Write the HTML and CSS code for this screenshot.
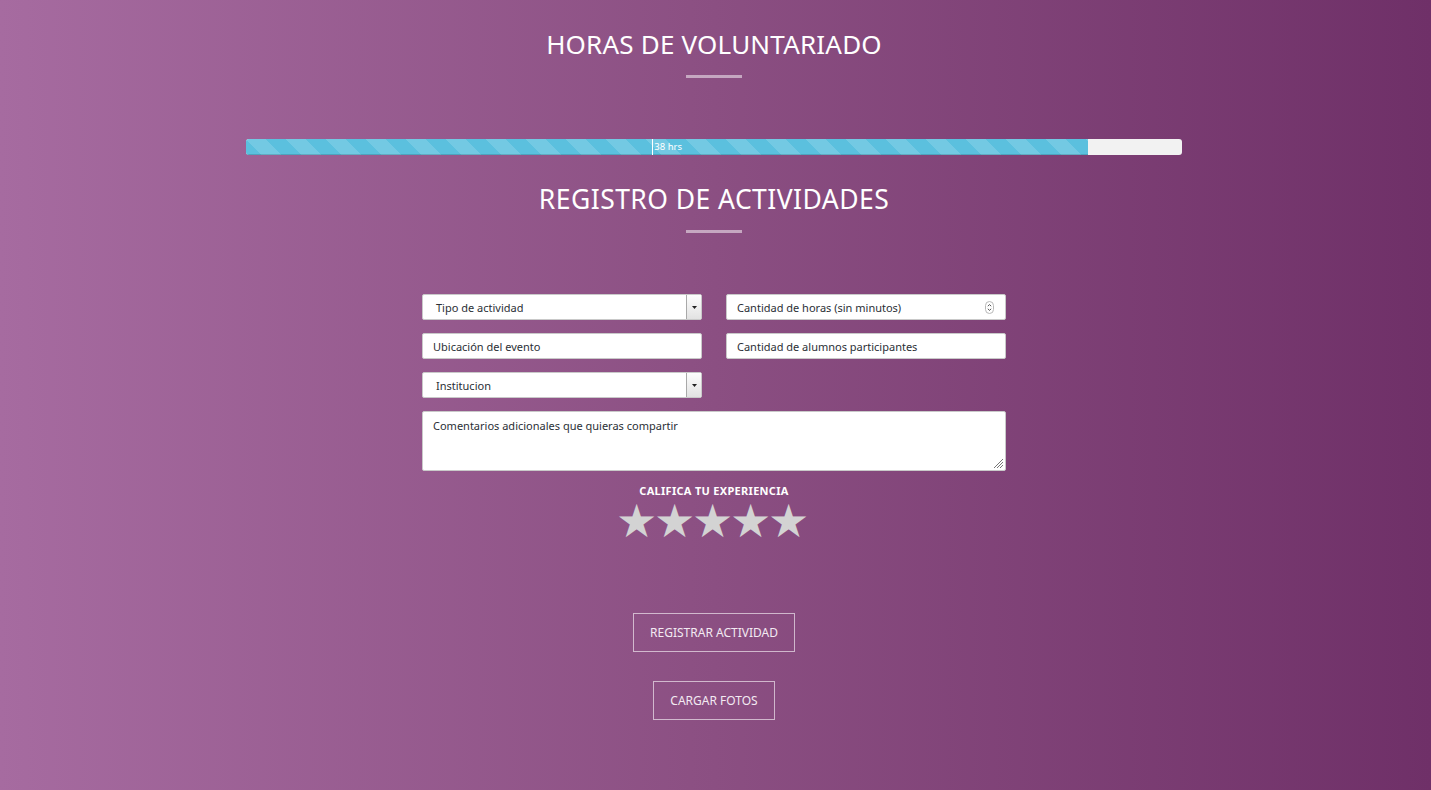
FILE: index.html
```html
<!DOCTYPE html>
<html lang="es">
<head>
<meta charset="utf-8">
<title>Horas de voluntariado</title>
<link rel="stylesheet" href="styles.css">
</head>
<body>
<main class="page">
  <section class="hours">
    <h1 class="title">HORAS DE VOLUNTARIADO</h1>
    <div class="rule"></div>
    <div class="progress">
      <div class="progress-fill" style="width: 90%"><span class="progress-label">38 hrs</span></div>
    </div>
  </section>

  <section class="register">
    <h2 class="title">REGISTRO DE ACTIVIDADES</h2>
    <div class="rule"></div>

    <form class="form">
      <div class="row">
        <div class="field select">
          <span class="select-text">Tipo de actividad</span>
          <span class="select-btn"><svg width="5" height="3" viewBox="0 0 5 3"><path d="M0 0h5L2.5 3z" fill="#222"/></svg></span>
        </div>
        <div class="field number">
          <span>Cantidad de horas (sin minutos)</span>
          <svg class="spin" width="9" height="13" viewBox="0 0 9 13"><rect x="0.5" y="0.5" width="8" height="12" rx="4" fill="#fff" stroke="#b8b8b8"/><path d="M2.8 5.2L4.5 3.6 6.2 5.2M2.8 7.8L4.5 9.4 6.2 7.8" fill="none" stroke="#444" stroke-width="0.9"/></svg>
        </div>
      </div>
      <div class="row">
        <div class="field text">Ubicación del evento</div>
        <div class="field text">Cantidad de alumnos participantes</div>
      </div>
      <div class="row">
        <div class="field select">
          <span class="select-text">Institucion</span>
          <span class="select-btn"><svg width="5" height="3" viewBox="0 0 5 3"><path d="M0 0h5L2.5 3z" fill="#222"/></svg></span>
        </div>
        <div class="spacer"></div>
      </div>
      <div class="field textarea">
        <span>Comentarios adicionales que quieras compartir</span>
        <svg class="grip" width="12" height="12" viewBox="0 0 12 12"><path d="M11 2L2 11M11 5L5 11M11 8L8 11" stroke="#777" stroke-width="1"/></svg>
      </div>
    </form>

    <div class="rating">
      <p class="rating-label">CALIFICA TU EXPERIENCIA</p>
      <div class="stars">
        <span class="star">★</span><span class="star">★</span><span class="star">★</span><span class="star">★</span><span class="star">★</span>
      </div>
    </div>

    <div class="actions">
      <button class="btn" type="button">REGISTRAR ACTIVIDAD</button>
      <button class="btn" type="button">CARGAR FOTOS</button>
    </div>
  </section>
</main>
</body>
</html>
```

FILE: styles.css
```css
* { box-sizing: border-box; }
html, body { margin: 0; height: 100%; }
body {
  background: linear-gradient(90deg, #a66ba0 0%, #8b4f82 50%, #6f3068 100%);
  font-family: "Noto Sans", "Open Sans", sans-serif;
  color: #fff;
  overflow: hidden;
}
.page {
  display: flex;
  flex-direction: column;
  align-items: center;
  padding-top: 26px;
  padding-right: 3px;
}
.hours, .register {
  display: flex;
  flex-direction: column;
  align-items: center;
}
.title {
  margin: 0;
  font-weight: 400;
  font-size: 26px;
  line-height: 36px;
  letter-spacing: 0.2px;
}
.register .title { letter-spacing: 0.45px; font-size: 26.5px; }
.rule {
  width: 56px;
  height: 3px;
  background: rgba(255,255,255,0.5);
  margin-top: 13px;
}
.progress {
  width: 936px;
  height: 16px;
  margin-top: 61px;
  background: #f2f2f2;
  border-radius: 3px;
  overflow: hidden;
  display: flex;
}
.progress-fill {
  height: 100%;
  background-color: #5bc0de;
  background-image: linear-gradient(45deg, rgba(255,255,255,.15) 25%, transparent 25%, transparent 50%, rgba(255,255,255,.15) 50%, rgba(255,255,255,.15) 75%, transparent 75%, transparent);
  background-size: 40px 40px;
  box-shadow: inset 0 -1px 0 rgba(0,0,0,.15);
  display: flex;
  align-items: center;
  justify-content: center;
}
.progress-label {
  font-size: 9.5px;
  line-height: 16px;
  color: #fff;
  border-left: 1px solid #fff;
  padding-left: 1px;
}
.register { margin-top: 26px; }
.form {
  margin-top: 61px;
  width: 584px;
  display: flex;
  flex-direction: column;
  gap: 13px;
}
.row {
  display: grid;
  grid-template-columns: minmax(0, 1fr) minmax(0, 1fr);
  column-gap: 24px;
}
.field {
  background: #fff;
  border: 1px solid #c9c9c9;
  border-radius: 2px;
  color: #2b2f36;
  font-size: 11px;
  height: 26px;
  display: flex;
  align-items: center;
  padding: 0 10px;
}
.select { padding: 0 0 0 13px; justify-content: space-between; }
.select-btn {
  width: 15px;
  height: 100%;
  border-left: 1px solid #a9a9a9;
  background: linear-gradient(#fdfdfd, #e2e2e2);
  display: flex;
  align-items: center;
  justify-content: center;
}
.number { justify-content: space-between; padding-right: 11px; }
.textarea {
  height: 60px;
  align-items: flex-start;
  padding-top: 6px;
  position: relative;
}
.grip { position: absolute; right: 1px; bottom: 1px; }
.rating {
  display: flex;
  flex-direction: column;
  align-items: center;
  margin-top: 13px;
}
.rating-label {
  margin: 0;
  font-size: 11px;
  font-weight: 700;
  letter-spacing: 0.3px;
  line-height: 14px;
}
.stars {
  display: flex;
  padding-right: 6px;
  padding-top: 1px;
}
.star {
  color: #d3d3d3;
  font-family: "DejaVu Sans", sans-serif;
  font-size: 46px;
  line-height: 44px;
  width: 38px;
  text-align: center;
}
.actions {
  margin-top: 70px;
  display: flex;
  flex-direction: column;
  align-items: center;
  gap: 29px;
}
.btn {
  background: transparent;
  border: 1px solid rgba(255,255,255,0.6);
  color: #f3eaf2;
  font-family: inherit;
  font-size: 12px;
  height: 39px;
  padding: 0 16px;
  cursor: pointer;
}
```
